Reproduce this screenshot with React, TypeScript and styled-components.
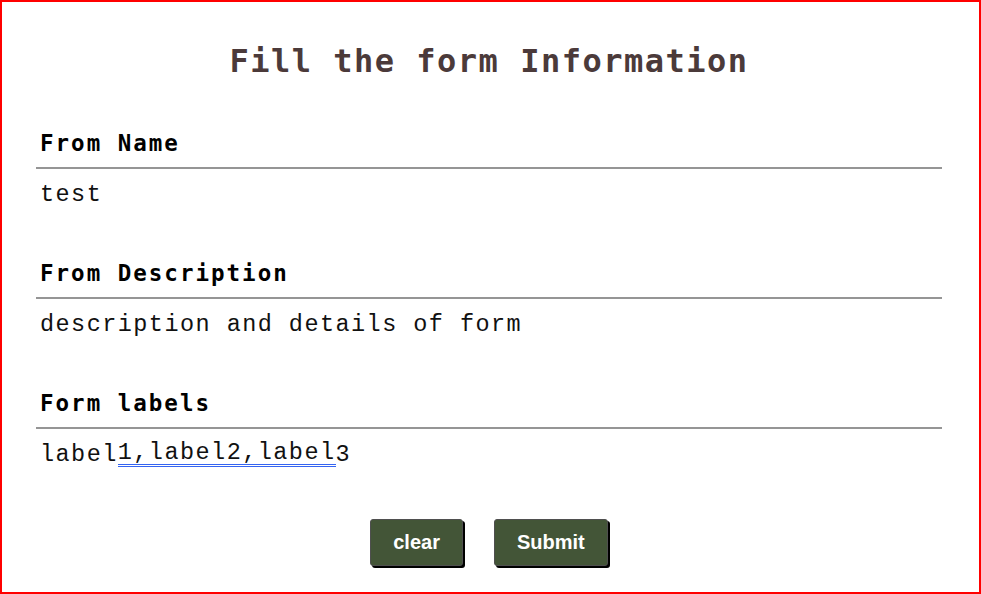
import React from "react";
import styled, { createGlobalStyle } from "styled-components";

const Global = createGlobalStyle`
  html, body { margin: 0; padding: 0; background: #ffffff; }
  * { box-sizing: border-box; }
`;

const Frame = styled.div`
  width: 981px;
  height: 594px;
  border: 2px solid #ff0000;
  padding: 41px 37px 0 34px;
  display: flex;
  flex-direction: column;
  font-family: "DejaVu Sans Mono", "Liberation Mono", monospace;
`;

const Title = styled.h1`
  margin: 0 0 49px 0;
  text-align: center;
  font-size: 32px;
  line-height: 36px;
  font-weight: 700;
  letter-spacing: 1.5px;
  color: #4b3a3a;
`;

const Field = styled.div`
  display: flex;
  flex-direction: column;
  margin-bottom: 39px;
`;

const Label = styled.label`
  display: block;
  padding: 0 0 9px 4px;
  font-size: 22.5px;
  line-height: 30px;
  font-weight: 700;
  letter-spacing: 2px;
  color: #000000;
  border-bottom: 2px solid #959595;
`;

const Value = styled.div`
  height: 50px;
  display: flex;
  align-items: center;
  padding-left: 4px;
  font-family: "Liberation Mono", "DejaVu Sans Mono", monospace;
  font-size: 23.5px;
  letter-spacing: 1.45px;
  color: #111111;
`;

const Marked = styled.span`
  border-bottom: 3px double #3564f2;
  line-height: 22px;
`;

const Buttons = styled.div`
  display: flex;
  justify-content: center;
  gap: 31px;
  margin-top: 1px;
`;

const Button = styled.button`
  height: 47px;
  padding: 0 22px;
  background: #435537;
  color: #ffffff;
  font-family: "Liberation Sans", Arial, sans-serif;
  font-weight: 700;
  font-size: 20px;
  border: 1px solid #4f4f4f;
  border-radius: 3px;
  box-shadow: 2px 2px 0 #000000;
  cursor: pointer;
`;

export default function App() {
  return (
    <>
      <Global />
      <Frame>
        <Title>Fill the form Information</Title>
        <Field>
          <Label>From Name</Label>
          <Value>test</Value>
        </Field>
        <Field>
          <Label>From Description</Label>
          <Value>description and details of form</Value>
        </Field>
        <Field>
          <Label>Form labels</Label>
          <Value>
            label<Marked>1,label2,label</Marked>3
          </Value>
        </Field>
        <Buttons>
          <Button>clear</Button>
          <Button>Submit</Button>
        </Buttons>
      </Frame>
    </>
  );
}
